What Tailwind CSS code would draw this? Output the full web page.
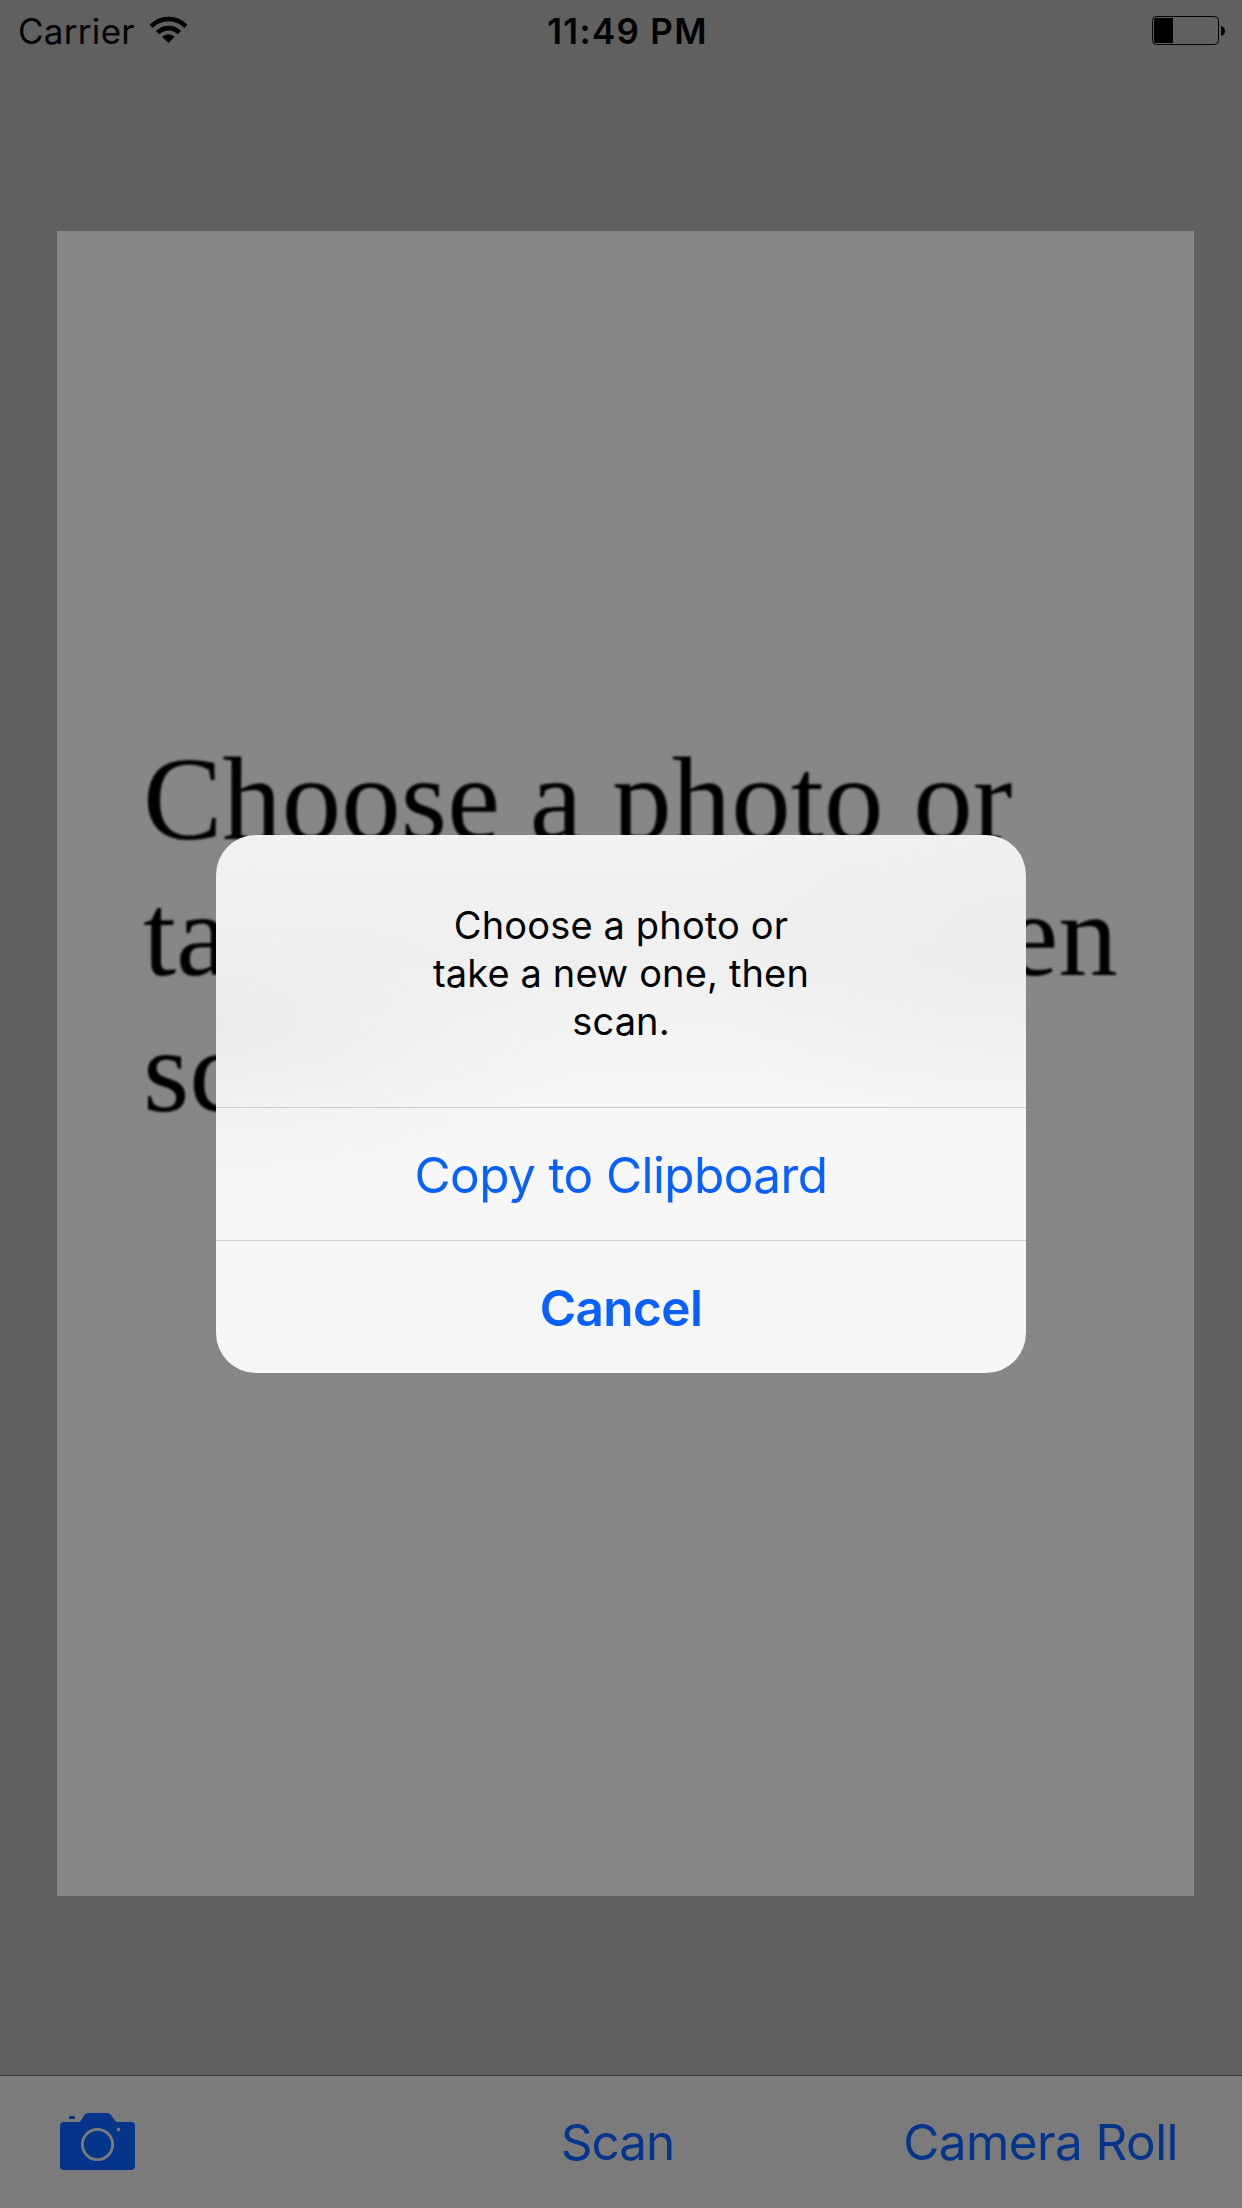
<!DOCTYPE html>
<html lang="en">
<head>
<meta charset="utf-8">
<title>Scan</title>
<script src="https://cdn.jsdelivr.net/npm/@tailwindcss/browser@4"></script>
</head>
<body class="bg-[#606060]">
<div class="relative flex h-[2208px] w-[1242px] flex-col overflow-hidden bg-[#606060] font-['Inter',sans-serif] text-black">
  <header class="grid h-[60px] grid-cols-3 items-start pl-[18px] pr-[16px] pt-2">
    <div class="flex">
      <span class="w-[117px] text-[35px] leading-[46px] tracking-[0.3px]">Carrier</span>
      <svg class="ml-[14px] mt-[8px]" width="40" height="30" viewBox="0 0 40 30" fill="none" stroke="#000">
        <path d="M2.1 10.3A24.4 24.4 0 0 1 36.9 10.3" stroke-width="4.6"/>
        <path d="M8.6 16.7A15.2 15.2 0 0 1 30.4 16.7" stroke-width="4.6"/>
        <path d="M19.5 27L13.2 20.7A9 9 0 0 1 25.8 20.7Z" fill="#000" stroke="none"/>
      </svg>
    </div>
    <div class="pl-[11px] text-center text-[35px] font-semibold leading-[46px] tracking-[1.3px]">11:49 PM</div>
    <svg class="mt-2 justify-self-end" width="74" height="30" viewBox="0 0 74 30">
      <rect x=".5" y=".5" width="66" height="28" rx="4" fill="none" stroke="#000"/>
      <path d="M4 2H21V27H4Q2 27 2 25V4Q2 2 4 2Z"/>
      <path d="M69 10Q73 11 73 15T69 20Z"/>
    </svg>
  </header>
  <main class="flex grow px-[57px] pb-[179px] pt-[171px]">
    <section class="w-[1137px] shrink-0 bg-[#878787] pl-[86px] pt-[500px]">
      <p class="whitespace-nowrap font-['Liberation_Serif',serif] text-[119px] leading-[136px] blur-[1px]">Choose a photo or<br>take a new one, then<br>scan.</p>
    </section>
  </main>
  <footer class="grid h-[133px] grid-cols-3 items-center border-t border-[#3c3c3c] bg-[#7b7b7b] pl-[60px] pr-[64px] text-[49.5px] text-[#04358a]">
    <svg class="-mt-px" width="75" height="57" viewBox="0 0 75 57" fill="#04358a">
      <path d="M4 9H18C20 9 21 8 22 6L24 2.5Q25.5 0 28 0H47Q50 0 51.5 2.5L54 6.5Q55.5 9 58 9H71Q75 9 75 13V53Q75 57 71 57H4Q0 57 0 53V13Q0 9 4 9Z"/>
      <path d="M9 6V4Q9 3 10 3H14Q15 3 15 4V6Z"/>
      <circle cx="37.5" cy="31.5" r="15.1" fill="none" stroke="#7b7b7b" stroke-width="2.8"/>
      <circle cx="58.5" cy="16.5" r="1.8" fill="#7b7b7b"/>
    </svg>
    <span class="pr-[3px] text-center tracking-[-1px]">Scan</span>
    <span class="whitespace-nowrap text-right tracking-[-0.6px]">Camera Roll</span>
  </footer>
  <div role="dialog" class="absolute left-[216px] top-[835px] flex h-[538px] w-[810px] flex-col overflow-hidden rounded-[40px] bg-[#f7f7f7] bg-[radial-gradient(ellipse_at_0%_35%,#ebebeb_0%,#eeeeee80_18%,transparent_32%),radial-gradient(ellipse_at_100%_20%,#ececec_0%,transparent_30%),linear-gradient(to_bottom,#f2f2f2_0%,#f0f0f0_24%,#f4f4f4_36%,#f7f7f7_50%)] text-center">
    <p class="h-[272px] pt-[66px] text-[38px] leading-[48px] tracking-[0.15px]">Choose a photo or<br>take a new one, then<br>scan.</p>
    <button class="h-[133px] border-t border-[#cccccc] pt-[2px] text-[49.5px] tracking-[-0.6px] text-[#0a60ff]">Copy to Clipboard</button>
    <button class="h-[133px] border-t border-[#cecfd3] pt-[2px] text-[49.5px] font-semibold tracking-[-0.6px] text-[#0a60ff]">Cancel</button>
  </div>
</div>
</body>
</html>
